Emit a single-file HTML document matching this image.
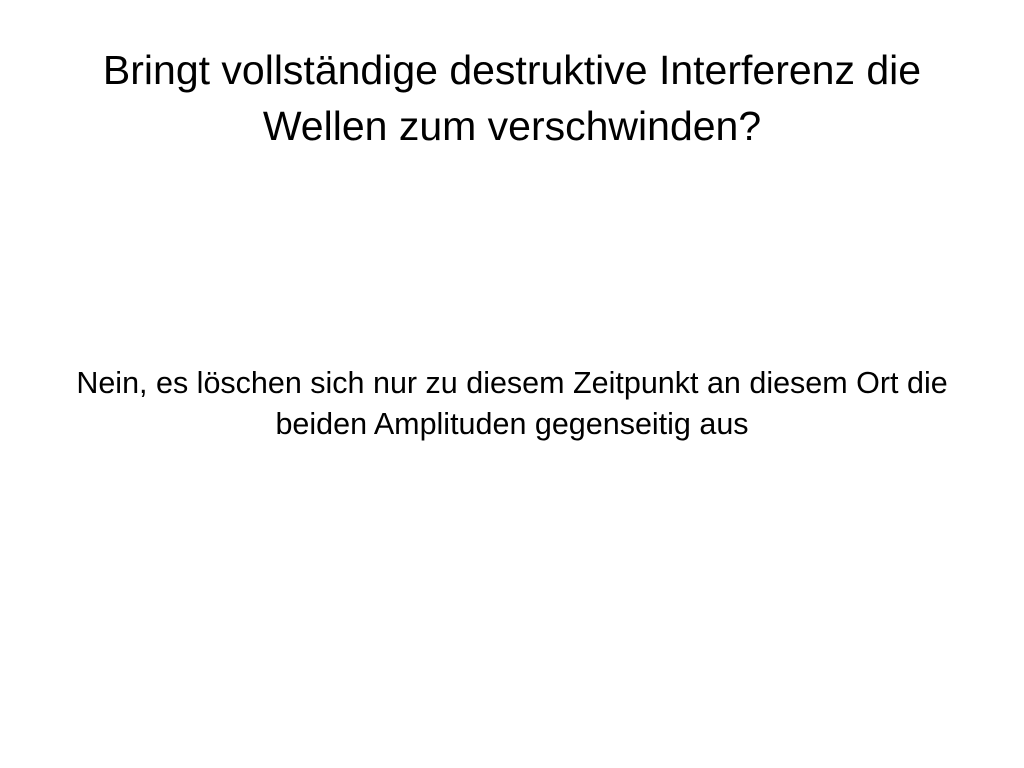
<!DOCTYPE html>
<html><head><meta charset="utf-8"><style>
html,body{margin:0;padding:0;background:#fff;width:1024px;height:768px;overflow:hidden}
body{font-family:"Liberation Sans","DejaVu Sans",sans-serif;color:#000;position:relative}
.t{position:absolute;left:0;width:1024px;text-align:center;top:42px;font-size:41px;line-height:56px;white-space:nowrap}
.b{position:absolute;left:0;width:1024px;text-align:center;top:363px;font-size:30.5px;line-height:41px;white-space:nowrap}
</style></head><body>
<div class="t">Bringt vollständige destruktive Interferenz die<br>Wellen zum verschwinden?</div>
<div class="b">Nein, es löschen sich nur zu diesem Zeitpunkt an diesem Ort die<br>beiden Amplituden gegenseitig aus</div>
</body></html>
